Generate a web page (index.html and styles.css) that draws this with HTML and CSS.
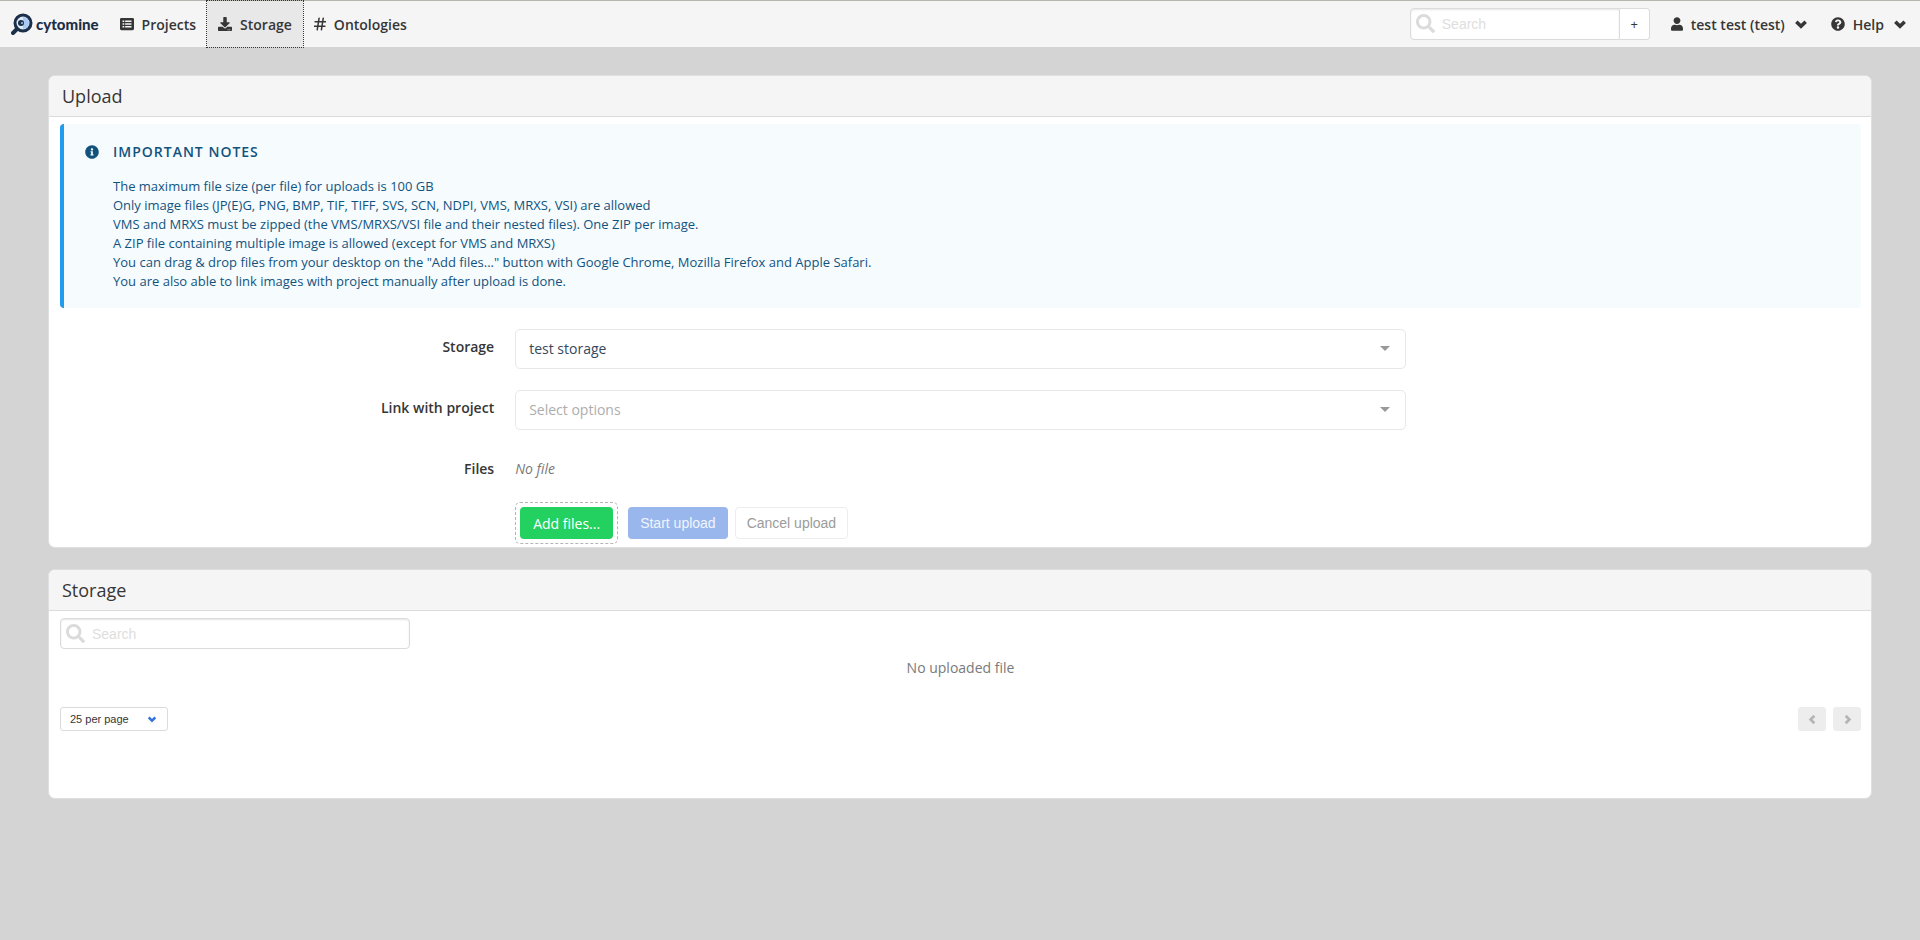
FILE: index.html
```html
<!DOCTYPE html>
<html lang="en">
<head>
<meta charset="utf-8">
<title>Cytomine - Storage</title>
<link rel="stylesheet" href="styles.css">
</head>
<body>
<svg class="sprite" aria-hidden="true">
  <symbol id="i-search" viewBox="0 0 512 512"><path d="M505 442.7L405.3 343c-4.5-4.500-10.600-7-17-7H372c27.600-35.300 44-79.700 44-128C416 93.100 322.900 0 208 0S0 93.100 0 208s93.100 208 208 208c48.300 0 92.700-16.400 128-44v16.300c0 6.400 2.500 12.500 7 17l99.700 99.700c9.400 9.400 24.600 9.400 33.900 0l28.300-28.300c9.400-9.400 9.400-24.600.1-34zM208 336c-70.700 0-128-57.200-128-128 0-70.700 57.200-128 128-128 70.700 0 128 57.200 128 128 0 70.700-57.200 128-128 128z"/></symbol>
  <symbol id="i-list" viewBox="0 0 512 512"><path fill-rule="evenodd" d="M48 32h416c26.500 0 48 21.500 48 48v352c0 26.500-21.500 48-48 48H48c-26.500 0-48-21.500-48-48V80c0-26.500 21.500-48 48-48zM92 126h64v60H92zM92 226h64v60H92zM92 326h64v60H92zM188 130h232v52H188zM188 230h232v52H188zM188 330h232v52H188z"/></symbol>
  <symbol id="i-download" viewBox="0 0 512 512"><path d="M216 0h80c13.300 0 24 10.700 24 24v168h87.700c17.800 0 26.700 21.500 14.100 34.100L269.700 378.300c-7.500 7.500-19.800 7.500-27.300 0L90.100 226.100c-12.600-12.600-3.700-34.100 14.100-34.100H192V24c0-13.300 10.700-24 24-24zm296 376v112c0 13.300-10.700 24-24 24H24c-13.300 0-24-10.700-24-24V376c0-13.300 10.700-24 24-24h146.700l49 49c20.100 20.100 52.500 20.100 72.600 0l49-49H488c13.300 0 24 10.700 24 24zm-124 88c0-11-9-20-20-20s-20 9-20 20 9 20 20 20 20-9 20-20zm64 0c0-11-9-20-20-20s-20 9-20 20 9 20 20 20 20-9 20-20z"/></symbol>
  <symbol id="i-hash" viewBox="0 0 448 512"><path d="M190 40L120 472M346 40L276 472M40 172H436M12 340H408" fill="none" stroke="currentColor" stroke-width="56" stroke-linecap="round"/></symbol>
  <symbol id="i-user" viewBox="0 0 448 512"><path d="M224 256c70.700 0 128-57.300 128-128S294.700 0 224 0 96 57.300 96 128s57.300 128 128 128zm89.600 32h-16.700c-22.200 10.200-46.900 16-72.900 16s-50.600-5.800-72.900-16h-16.700C60.200 288 0 348.200 0 422.400V464c0 26.500 21.500 48 48 48h352c26.500 0 48-21.500 48-48v-41.600c0-74.200-60.200-134.400-134.400-134.400z"/></symbol>
  <symbol id="i-help" viewBox="0 0 512 512"><path d="M504 256c0 137-111 248-248 248S8 393 8 256C8 119 119 8 256 8s248 111 248 248zM262.700 90c-54.500 0-89.300 23-116.600 63.800-3.500 5.300-2.400 12.400 2.700 16.200l34.700 26.300c5.200 4 12.600 3 16.700-2.100 17.900-22.700 30.100-35.800 57.300-35.800 20.400 0 45.700 13.100 45.700 33 0 15-12.400 22.700-32.500 34C247.100 238.500 216 254.900 216 296v4c0 6.600 5.400 12 12 12h56c6.600 0 12-5.400 12-12v-1.300c0-28.500 83.200-29.700 83.200-106.700 0-58-60.200-102-116.500-102zM256 338c-25.400 0-46 20.600-46 46s20.600 46 46 46 46-20.600 46-46-20.600-46-46-46z"/></symbol>
  <symbol id="i-info" viewBox="0 0 512 512"><path d="M256 8C119 8 8 119 8 256c0 137 111 248 248 248s248-111 248-248C504 119 393 8 256 8zm0 110c23.200 0 42 18.800 42 42s-18.800 42-42 42-42-18.800-42-42 18.800-42 42-42zm56 254c0 6.600-5.400 12-12 12h-88c-6.600 0-12-5.400-12-12v-24c0-6.600 5.400-12 12-12h12v-64h-12c-6.600 0-12-5.400-12-12v-24c0-6.600 5.400-12 12-12h64c6.600 0 12 5.400 12 12v100h12c6.600 0 12 5.400 12 12v24z"/></symbol>
  <symbol id="i-chevron" viewBox="0 0 12 12"><path d="M2 4l4 4 4-4" fill="none" stroke="currentColor" stroke-width="3"/></symbol>
</svg>

<header class="navbar">
  <nav class="nav-group" aria-label="Main">
    <a class="brand" href="#">
      <svg class="brand-mark" viewBox="0 0 22 22" aria-hidden="true">
        <path d="M6 16L2 20" stroke="#1c2f48" stroke-width="4" stroke-linecap="round"/>
        <circle cx="12" cy="10" r="8" fill="#dbe9fa" stroke="#1c2f48" stroke-width="3"/>
        <path d="M12 4a6 6 0 0 1 0 12z" fill="#a9c9f3"/>
        <circle cx="10" cy="10" r="3" fill="#1c2f48"/>
        <circle cx="11" cy="10" r="1" fill="#a9c9f3"/>
      </svg>
      <span class="brand-name">cytomine</span>
    </a>
    <a class="nav-item" href="#"><svg class="icon"><use href="#i-list"/></svg>Projects</a>
    <a class="nav-item nav-item-active" href="#" aria-current="page"><svg class="icon"><use href="#i-download"/></svg>Storage</a>
    <a class="nav-item" href="#"><svg class="icon icon-narrow"><use href="#i-hash"/></svg>Ontologies</a>
  </nav>
  <div class="nav-group nav-group-end">
    <form class="nav-search">
      <div class="search">
        <svg class="search-icon"><use href="#i-search"/></svg>
        <input class="search-input" type="text" placeholder="Search" aria-label="Search everywhere">
      </div>
      <button class="nav-plus" type="button" aria-label="Advanced search">+</button>
    </form>
    <button class="nav-item" type="button"><svg class="icon icon-narrow"><use href="#i-user"/></svg>test test (test)<svg class="caret"><use href="#i-chevron"/></svg></button>
    <button class="nav-item" type="button"><svg class="icon"><use href="#i-help"/></svg>Help<svg class="caret"><use href="#i-chevron"/></svg></button>
  </div>
</header>

<main class="content">
  <section class="panel">
    <h1 class="panel-heading">Upload</h1>
    <div class="panel-body">
      <div class="notice">
        <svg class="icon"><use href="#i-info"/></svg>
        <div>
          <h2 class="notice-title">Important notes</h2>
          <ul class="notice-list">
            <li>The maximum file size (per file) for uploads is 100 GB</li>
            <li>Only image files (JP(E)G, PNG, BMP, TIF, TIFF, SVS, SCN, NDPI, VMS, MRXS, VSI) are allowed</li>
            <li>VMS and MRXS must be zipped (the VMS/MRXS/VSI file and their nested files). One ZIP per image.</li>
            <li>A ZIP file containing multiple image is allowed (except for VMS and MRXS)</li>
            <li>You can drag &amp; drop files from your desktop on the "Add files..." button with Google Chrome, Mozilla Firefox and Apple Safari.</li>
            <li>You are also able to link images with project manually after upload is done.</li>
          </ul>
        </div>
      </div>
      <form class="upload-form">
        <label class="field-label" for="storage">Storage</label>
        <div class="picker">
          <select class="picker-select" id="storage"><option>test storage</option></select>
        </div>
        <label class="field-label" for="project">Link with project</label>
        <div class="picker">
          <select class="picker-select picker-empty" id="project"><option>Select options</option></select>
        </div>
        <span class="field-label">Files</span>
        <em class="no-file">No file</em>
        <div class="actions">
          <div class="drop-zone"><button class="button button-add" type="button">Add files...</button></div>
          <button class="button button-start" type="button" disabled>Start upload</button>
          <button class="button button-cancel" type="button" disabled>Cancel upload</button>
        </div>
      </form>
    </div>
  </section>

  <section class="panel panel-storage">
    <h1 class="panel-heading">Storage</h1>
    <div class="panel-body">
      <div class="search file-search">
        <svg class="search-icon"><use href="#i-search"/></svg>
        <input class="search-input" type="text" placeholder="Search" aria-label="Search files">
      </div>
      <p class="empty">No uploaded file</p>
      <div class="pagination">
        <div class="per-page">
          <select class="per-page-select" aria-label="Files per page"><option>25 per page</option></select>
          <svg class="per-page-caret"><use href="#i-chevron"/></svg>
        </div>
        <div class="pager">
          <button class="pager-button" type="button" disabled aria-label="Previous page"><svg class="pager-icon pager-prev"><use href="#i-chevron"/></svg></button>
          <button class="pager-button" type="button" disabled aria-label="Next page"><svg class="pager-icon pager-next"><use href="#i-chevron"/></svg></button>
        </div>
      </div>
    </div>
  </section>
</main>
</body>
</html>
```

FILE: styles.css
```css
* { box-sizing: border-box; }

body {
  margin: 0;
  background: #d4d4d4;
  color: #363636;
  font: 14px/21px "Open Sans", sans-serif;
}

h1, h2, p, ul { margin: 0; padding: 0; font-weight: 400; }
ul { list-style: none; }
svg { fill: currentColor; flex: none; }
button, input, select { font: inherit; color: inherit; }
.sprite { position: absolute; width: 0; height: 0; }
.icon { width: 14px; height: 14px; }
.icon-narrow { width: 12px; }

/* Top bar */
.navbar {
  display: flex;
  justify-content: space-between;
  min-height: 47px;
  padding-right: 2px;
  border-top: 1px solid #b6b5b0;
  background: #f5f5f5;
}
.nav-group { display: flex; align-items: stretch; }
.nav-group-end { gap: 1px; }
.brand {
  display: flex;
  align-items: center;
  gap: 3px;
  padding: 0 10px 0 11px;
  color: #1c2f48;
  text-decoration: none;
}
.brand-mark { width: 22px; height: 22px; }
.brand-name { font: 900 15px/20px Lato, sans-serif; }
.nav-item {
  display: flex;
  align-items: center;
  gap: 8px;
  padding: 0 11px;
  border: 0;
  background: none;
  color: #363636;
  font-weight: 600;
  text-decoration: none;
}
.nav-item-active { background: #e8e8e8; outline: 1px dotted #363636; }
.caret { width: 14px; height: 14px; margin-left: 1px; }
.nav-search { display: flex; align-items: center; margin-right: 9px; }
.nav-search .search { width: 210px; }
.nav-search .search-input { border-radius: 4px 0 0 4px; }
.nav-plus {
  width: 30px;
  height: 32px;
  padding: 0;
  border: 1px solid #dbdbdb;
  border-left: 0;
  border-radius: 0 4px 4px 0;
  background: #fff;
  font-size: 13px;
}

/* Search box */
.search { position: relative; }
.search-icon {
  position: absolute;
  top: 6px;
  left: 6px;
  width: 19px;
  height: 19px;
  color: #dbdbdb;
}
.search-input {
  display: block;
  width: 100%;
  height: 32px;
  padding: 0 8px 0 31px;
  border: 1px solid #dbdbdb;
  border-radius: 4px;
  background: #fff;
  box-shadow: inset 0 1px 2px rgba(10, 10, 10, .1);
  font-family: "Liberation Sans", sans-serif;
}
.search-input::placeholder { color: #dedede; }

/* Panels */
.content {
  display: flex;
  flex-direction: column;
  gap: 21px;
  padding: 28px 48px;
}
.panel {
  overflow: hidden;
  border: 1px solid #dfdfdf;
  border-radius: 7px;
  background: #fff;
}
.panel-heading {
  padding: 8px 13px;
  border-bottom: 1px solid #dbdbdb;
  background: #f5f5f5;
  font-size: 18px;
  line-height: 24px;
}
.panel-body { padding: 7px 10px 3px 11px; }
.panel-storage { min-height: 230px; }

.notice {
  display: flex;
  gap: 14px;
  padding: 21px 21px 17px;
  border-left: 4px solid #209cee;
  border-radius: 4px;
  background: #f6fbfe;
  color: #12537e;
}
.notice-title {
  margin-bottom: 18px;
  font-size: 14px;
  font-weight: 600;
  line-height: 14px;
  letter-spacing: 1px;
  text-transform: uppercase;
}
.notice-list { font-size: 13px; line-height: 19px; }

/* Upload form */
.upload-form {
  display: grid;
  grid-template-columns: 39fr 80fr 39fr;
  gap: 21px;
  margin-top: 21px;
}
.field-label {
  grid-column: 1;
  padding-top: 7px;
  font-weight: 600;
  text-align: right;
}
.picker { position: relative; }
.picker::after {
  content: "";
  position: absolute;
  top: 17px;
  right: 16px;
  border: 5px solid transparent;
  border-top-color: #999;
  border-bottom: 0;
  pointer-events: none;
}
.picker-select {
  display: block;
  width: 100%;
  height: 40px;
  padding: 0 40px 2px 13px;
  appearance: none;
  border: 1px solid #e8e8e8;
  border-radius: 5px;
  background: #fff;
  color: #35495e;
}
.picker-empty { color: #adadad; }
.no-file { padding: 7px 0 2px; color: #7a7a7a; }
.actions { grid-column: 2; display: flex; align-items: center; gap: 7px; }
.drop-zone {
  margin-right: 3px;
  padding: 4px;
  border: 1px dashed #b5b5b5;
  border-radius: 5px;
}
.button {
  display: block;
  height: 32px;
  padding: 0 11px;
  border: 1px solid transparent;
  border-radius: 4px;
  font-family: "Liberation Sans", sans-serif;
}
.button-add {
  padding: 0 12px;
  background: #23d160;
  color: #fff;
  font-family: "Open Sans", sans-serif;
}
.button-start { background: #99b7ed; color: #f0f5fd; }
.button-cancel { border-color: #ededed; background: #fff; color: #9b9b9b; }

/* File list */
.file-search { width: 350px; max-width: 100%; }
.file-search .search-input { height: 31px; }
.empty { margin-top: 8px; color: #7a7a7a; text-align: center; }
.pagination { display: flex; justify-content: space-between; margin-top: 29px; }
.per-page { position: relative; }
.per-page-select {
  display: block;
  width: 108px;
  height: 24px;
  padding: 0 24px 0 9px;
  appearance: none;
  border: 1px solid #dbdbdb;
  border-radius: 3px;
  background: #fff;
  font: 11px/16px "Liberation Sans", sans-serif;
}
.per-page-caret {
  position: absolute;
  top: 7px;
  right: 11px;
  width: 10px;
  height: 10px;
  color: #3273dc;
  pointer-events: none;
}
.pager { display: flex; gap: 7px; }
.pager-button {
  display: flex;
  align-items: center;
  justify-content: center;
  width: 28px;
  height: 24px;
  padding: 0;
  border: 0;
  border-radius: 3px;
  background: #ededed;
  color: #b5b5b5;
}
.pager-icon { width: 11px; height: 11px; }
.pager-prev { transform: rotate(90deg); }
.pager-next { transform: rotate(-90deg); }
```
